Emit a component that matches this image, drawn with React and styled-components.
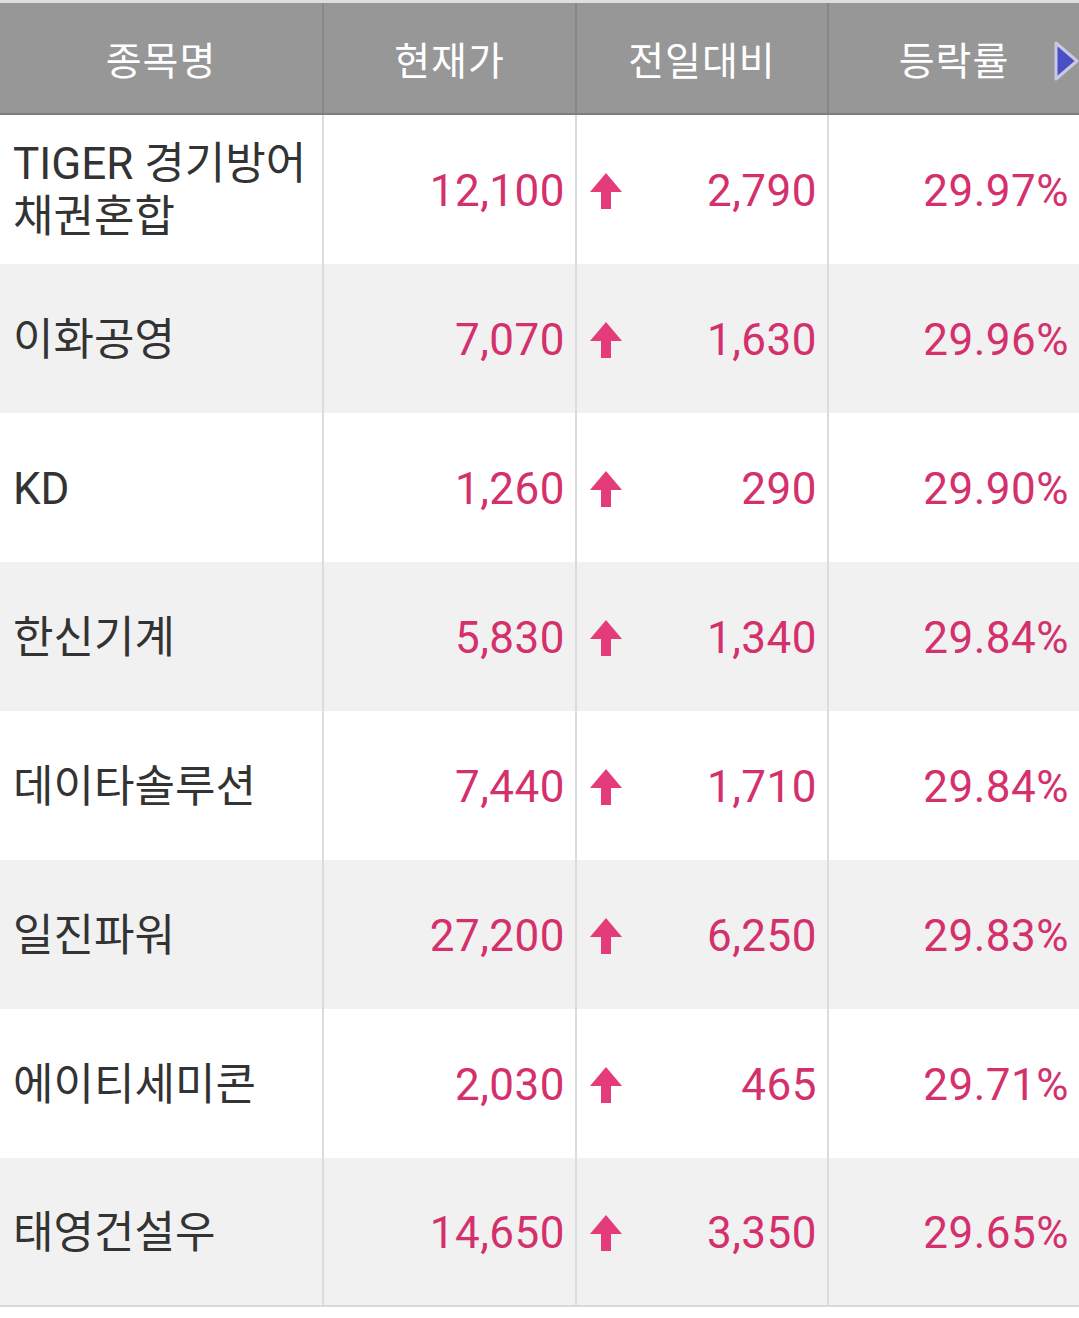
import React from "react";
import styled, { createGlobalStyle } from "styled-components";

const Global = createGlobalStyle`
  html, body { margin: 0; padding: 0; background: #ffffff; }
  body { font-family: Roboto, "Noto Sans CJK KR", sans-serif; }
`;

const Table = styled.div`
  width: 1079px;
  border-top: 3px solid #dedede;
`;

const cols = "324px 253px 252px 250px";

const HeaderRow = styled.div`
  display: grid;
  grid-template-columns: ${cols};
  height: 110px;
  background: #979797;
  border-bottom: 2px solid #7e7e7e;
  position: relative;
`;

const HeaderCell = styled.div`
  display: flex;
  align-items: center;
  justify-content: center;
  color: #ffffff;
  font-family: "Noto Sans CJK KR", sans-serif;
  font-size: 39px;
  letter-spacing: 1px;
  border-right: ${(p) => (p.$last ? "none" : "2px solid #888888")};
`;

const NextArrow = styled.svg`
  position: absolute;
  right: 0;
  top: 37px;
`;

const Row = styled.div`
  display: grid;
  grid-template-columns: ${cols};
  height: 149px;
  background: ${(p) => (p.$alt ? "#f1f1f1" : "#ffffff")};
  border-bottom: ${(p) => (p.$last ? "2px solid #dadada" : "none")};
  box-sizing: border-box;
`;

const Cell = styled.div`
  display: flex;
  align-items: center;
  justify-content: ${(p) => p.$justify || "flex-end"};
  padding: ${(p) => p.$pad || "3px 10px 0 0"};
  border-right: ${(p) => (p.$last ? "none" : "2px solid #dcdcdc")};
  box-sizing: border-box;
  min-width: 0;
`;

const Name = styled.div`
  color: #333333;
  font-family: Roboto, "Noto Sans CJK KR", sans-serif;
  font-size: 44px;
  line-height: 53px;
`;

const Num = styled.span`
  color: #d4306c;
  font-family: Roboto, sans-serif;
  font-size: 44px;
  letter-spacing: 0.5px;
`;

const Arrow = () => (
  <svg width="32" height="36" viewBox="0 0 32 36">
    <polygon points="16,0 32,19 0,19" fill="#e43b7b" />
    <rect x="11" y="18" width="10" height="18" fill="#e43b7b" />
  </svg>
);

const data = [
  ["TIGER 경기방어\n채권혼합", "12,100", "2,790", "29.97%"],
  ["이화공영", "7,070", "1,630", "29.96%"],
  ["KD", "1,260", "290", "29.90%"],
  ["한신기계", "5,830", "1,340", "29.84%"],
  ["데이타솔루션", "7,440", "1,710", "29.84%"],
  ["일진파워", "27,200", "6,250", "29.83%"],
  ["에이티세미콘", "2,030", "465", "29.71%"],
  ["태영건설우", "14,650", "3,350", "29.65%"],
];

export default function App() {
  return (
    <>
      <Global />
      <Table>
        <HeaderRow>
          <HeaderCell>종목명</HeaderCell>
          <HeaderCell>현재가</HeaderCell>
          <HeaderCell>전일대비</HeaderCell>
          <HeaderCell $last>등락률</HeaderCell>
          <NextArrow width="26" height="42" viewBox="0 0 26 42">
            <polygon
              points="3,3 24,21 3,39"
              fill="#4a4fc4"
              stroke="#c9c9e6"
              strokeWidth="3"
              strokeLinejoin="round"
            />
          </NextArrow>
        </HeaderRow>
        {data.map((r, i) => (
          <Row key={i} $alt={i % 2 === 1} $last={i === data.length - 1}>
            <Cell $justify="flex-start" $pad="3px 0 0 13px">
              <Name>
                {r[0].split("\n").map((l, j) => (
                  <div key={j}>{l}</div>
                ))}
              </Name>
            </Cell>
            <Cell>
              <Num>{r[1]}</Num>
            </Cell>
            <Cell $justify="space-between" $pad="3px 10px 0 13px">
              <Arrow />
              <Num>{r[2]}</Num>
            </Cell>
            <Cell $last>
              <Num>{r[3]}</Num>
            </Cell>
          </Row>
        ))}
      </Table>
    </>
  );
}
